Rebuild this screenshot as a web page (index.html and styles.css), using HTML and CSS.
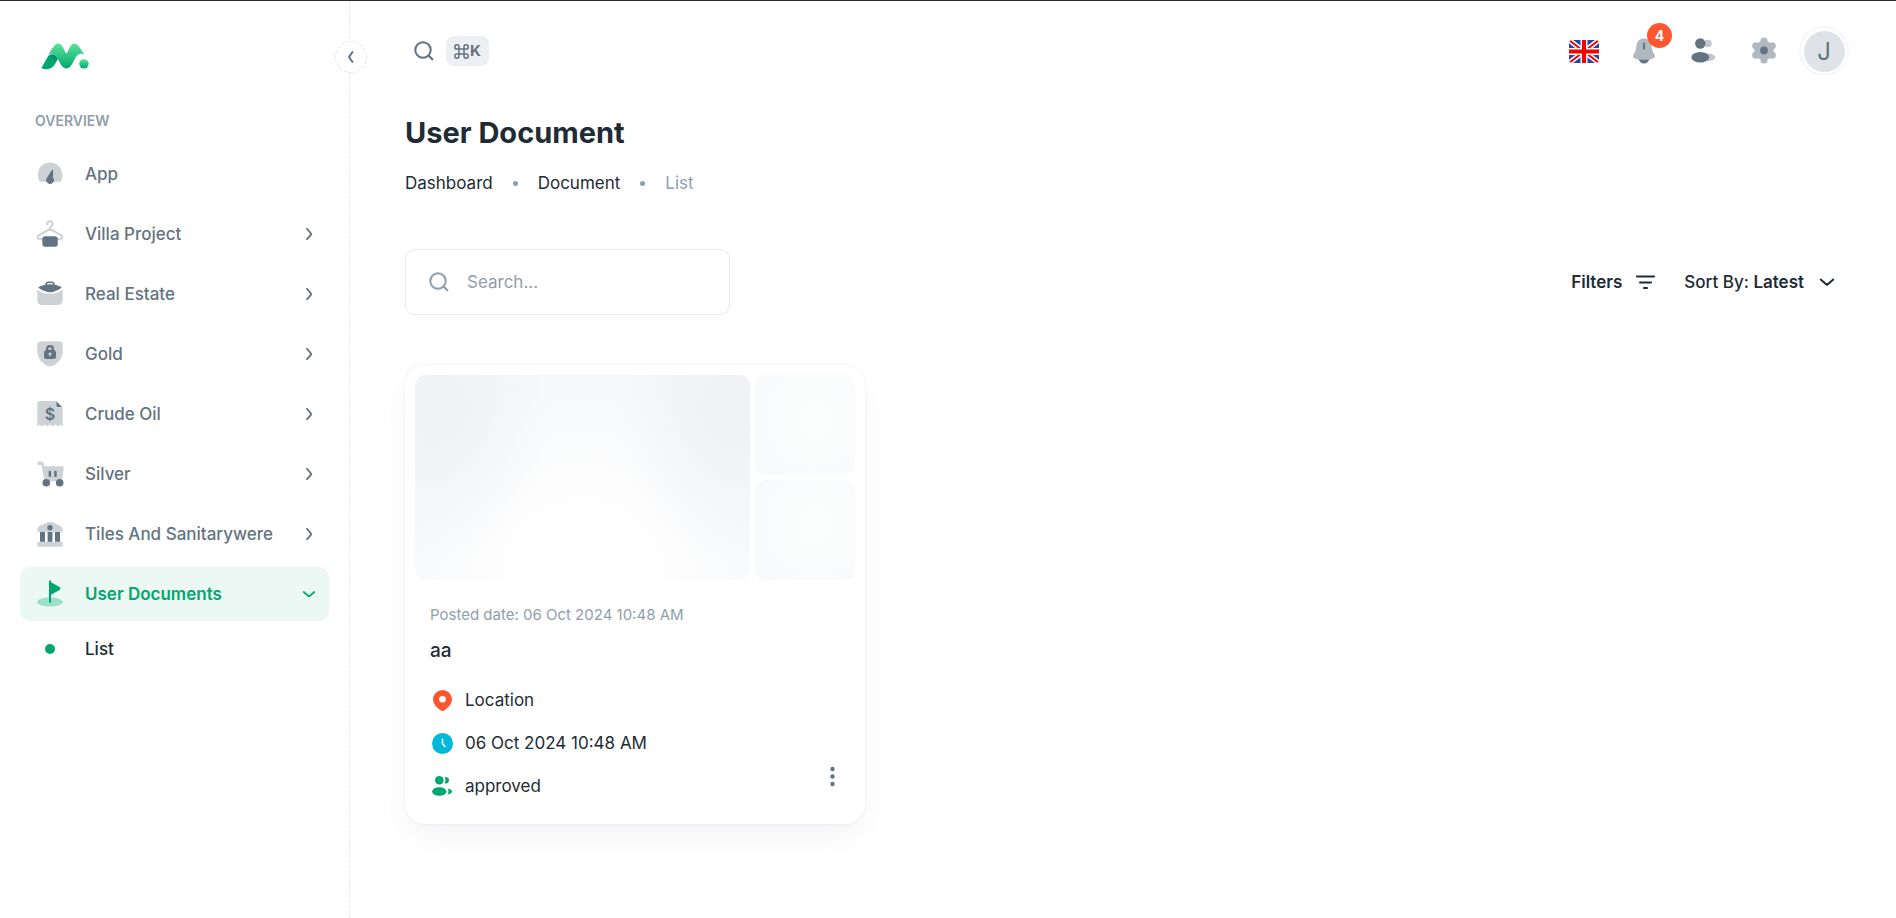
FILE: index.html
```html
<!DOCTYPE html>
<html lang="en">
<head>
<meta charset="utf-8">
<meta name="viewport" content="width=device-width, initial-scale=1">
<title>User Document</title>
<link rel="stylesheet" href="styles.css">
</head>
<body>
<svg class="defs" aria-hidden="true">
  <defs>
    <symbol id="next" viewBox="0 0 20 20"><path d="M8 4.800Q11.800 9 12.300 10Q11.800 11 8 15.200" fill="none" stroke="currentColor" stroke-width="1.800" stroke-linecap="round" stroke-linejoin="round"/></symbol>
    <symbol id="down" viewBox="0 0 20 20"><path d="M4.800 8Q9 11.800 10 12.300Q11 11.800 15.200 8" fill="none" stroke="currentColor" stroke-width="1.700" stroke-linecap="round" stroke-linejoin="round"/></symbol>
    <symbol id="search" viewBox="0 0 24 24"><circle cx="11" cy="11" r="7.700" fill="none" stroke="currentColor" stroke-width="2"/><path d="M16.500 16.500L20.300 20.300" stroke="currentColor" stroke-width="2.200" stroke-linecap="round"/></symbol>
  </defs>
</svg>
<div class="layout">
  <aside class="sidebar">
    <a class="logo" href="#" aria-label="Home">
      <svg width="50" height="50" viewBox="0 0 512 512">
        <defs>
          <linearGradient id="g1" x1="152" y1="168" x2="65" y2="345" gradientUnits="userSpaceOnUse"><stop stop-color="#007867"/><stop offset=".8" stop-color="#00a76f"/></linearGradient>
          <linearGradient id="g2" x1="0" y1="0" x2="0" y2="1"><stop stop-color="#5be49b"/><stop offset="1" stop-color="#00a76f"/></linearGradient>
        </defs>
        <path fill="url(#g2)" d="M444.310 229.726c-46.270-80.956-94.100-157.228-149.043-45.344-7.516 14.384-12.995 42.337-25.267 42.337v-.142c-12.272 0-17.750-27.953-25.265-42.337C189.790 72.356 141.960 148.628 95.690 229.584c-3.483 6.106-6.828 11.932-9.690 16.996 106.038-67.127 97.110 135.667 184 137.278V384c86.891-1.611 77.962-204.405 184-137.280-2.860-5.062-6.206-10.888-9.690-16.994"/>
        <path fill="url(#g1)" d="M183.168 285.573C170 309 154 339 145 351C134 366 122 376 108 382C78 396 44 396 14 379L86 254L89 252C138 223 162 246 183.168 285.573z"/>
        <circle cx="450" cy="336" r="48" fill="url(#g2)"/>
      </svg>
    </a>
    <h2 class="section">OVERVIEW</h2>
    <nav class="nav" aria-label="Main">
      <a class="item" href="#">
        <svg class="pic" viewBox="0 0 30 30"><path class="soft" d="M5 22.700C1 19 2 3.500 15 3.500S29 19 25.600 22.700Q15 23.500 5 22.700Z"/><path d="M16.500 11.500Q18 10 18.100 12L18 18.600A3.800 3.800 0 1 1 12.200 18.600Z"/></svg>
        <span class="label">App</span>
      </a>
      <a class="item" href="#">
        <svg class="pic" viewBox="0 0 30 30"><path class="wire" d="M12 5.300C12 1.500 17.700 1.300 17.600 5C17.500 7 15 7.300 15 9.800L3.300 16.700C2 18 2.300 20 4.500 20H25.500C27.700 20 28 18 26.700 16.700L15 9.800"/><rect x="7.300" y="17.300" width="15.500" height="10.500" rx="3"/></svg>
        <span class="label">Villa Project</span><svg class="arrow"><use href="#next"/></svg>
      </a>
      <a class="item" href="#">
        <svg class="pic" viewBox="0 0 30 30"><path class="soft" d="M2.300 10.700Q7 13.500 9.500 14.600H20.500Q23 13.500 27.700 10.700V21Q27.700 26 22.700 26H7.300Q2.300 26 2.300 21Z"/><path fill-rule="evenodd" d="M3.300 8.700Q4 7.200 10 5.800Q11 2.500 13 2.500H17Q19 2.500 20 5.800Q26 7.200 26.700 8.700Q20 13 15 13.300Q10 13 3.300 8.700ZM11.600 5.500Q15 5 18.400 5.500Q17.800 3.900 16.700 3.900H13.300Q12.200 3.900 11.600 5.500Z"/></svg>
        <span class="label">Real Estate</span><svg class="arrow"><use href="#next"/></svg>
      </a>
      <a class="item" href="#">
        <svg class="pic" viewBox="0 0 30 30"><path class="soft" d="M2.300 5Q2.500 2.700 5 2.500Q15 1.800 25 2.500Q27.500 2.700 27.700 5V12C27.500 20 22 26 15 27.700C8 26 2.500 20 2.300 12Z"/><path fill-rule="evenodd" d="M11 11V10A4 4 0 0 1 19 10V11Q21 11.500 21 13.500V17.500Q21 20 18.500 20H11.500Q9 20 9 17.500V13.500Q9 11.500 11 11ZM13.200 10.800H16.800V9.800Q16.800 8.300 15 8.300T13.200 9.800ZM15 13.500A1.300 1.300 0 0 0 14.300 16L14.500 17.500H15.500L15.700 16A1.300 1.300 0 0 0 15 13.500Z"/></svg>
        <span class="label">Gold</span><svg class="arrow"><use href="#next"/></svg>
      </a>
      <a class="item" href="#">
        <svg class="pic" viewBox="0 0 30 30"><path class="soft" d="M5 2H21V6Q21 9 24 9H27.700V27.500L25.500 25.500L23 27.500L20.500 25.500L17.700 27.500L15 25.500L12.300 27.500L9.600 25.500L7 27.500L4.500 25.500L2.300 27.500V5Q2.300 2 5 2Z"/><path d="M21.300 2.300L27.300 8.300H23Q21.300 8.300 21.300 6.600Z"/><text class="coin" x="15" y="21">$</text></svg>
        <span class="label">Crude Oil</span><svg class="arrow"><use href="#next"/></svg>
      </a>
      <a class="item" href="#">
        <svg class="pic" viewBox="0 0 30 30"><path class="soft" d="M4 2.500H6.500Q8.500 2.500 9 5L9.500 7.300H27Q29 7.300 28.700 9.500L27.300 19.500Q27 22 24.500 22.300H11.500Q9.500 22 9 20L6.500 6H4Q2.500 5.700 2.500 4.200T4 2.500Z"/><circle cx="11.300" cy="23.700" r="3.800"/><circle cx="24.700" cy="23.700" r="3.800"/><rect x="13.600" y="11.700" width="2.500" height="6.200" rx="1.200"/><rect x="19.200" y="11.700" width="2.500" height="6.200" rx="1.200"/></svg>
        <span class="label">Silver</span><svg class="arrow"><use href="#next"/></svg>
      </a>
      <a class="item" href="#">
        <svg class="pic" viewBox="0 0 30 30"><path class="soft" d="M4.500 7L12.500 3.200Q15 2.200 17.500 3.200L25.500 7Q27.700 8.500 27.700 10.500V11.500Q27.700 13 26 13H4Q2.300 13 2.300 11.500V10.500Q2.300 8.500 4.500 7Z"/><path d="M5 13H10V22.700H5ZM12.600 13H17.400V22.700H12.600ZM20 13H25V22.700H20Z"/><circle cx="15" cy="8.700" r="2.700"/><rect class="soft" x="2.300" y="22.700" width="25.400" height="5" rx="1.500"/></svg>
        <span class="label">Tiles And Sanitarywere</span><svg class="arrow"><use href="#next"/></svg>
      </a>
      <a class="item active" href="#" aria-expanded="true">
        <svg class="pic" viewBox="0 0 30 30"><ellipse class="soft" cx="15" cy="23" rx="12.700" ry="4.500"/><path d="M14 2Q14 1.200 15 1.200T16 2.200V3.200L24.500 8Q26.500 9.500 24.500 11L16 15.700V23.500H14Z"/></svg>
        <span class="label">User Documents</span><svg class="arrow"><use href="#down"/></svg>
      </a>
      <a class="item sub" href="#" aria-current="page">
        <span class="bullet"><span class="dot"></span></span>
        <span class="label">List</span>
      </a>
    </nav>
    <button class="collapse" type="button" aria-label="Collapse menu"><svg width="20" height="20" viewBox="0 0 20 20"><path d="M11.500 5L8 10L11.500 15" fill="none" stroke="currentColor" stroke-width="2" stroke-linecap="round" stroke-linejoin="round"/></svg></button>
  </aside>

  <div class="page">
    <header class="topbar">
      <button class="quick" type="button" aria-label="Search">
        <svg width="24" height="24"><use href="#search"/></svg>
        <kbd class="key"><svg width="15" height="15" viewBox="0 0 15 15"><path d="M5 5V2.900A2.100 2.100 0 1 0 2.900 5H12.100A2.100 2.100 0 1 0 10 2.900V12.100A2.100 2.100 0 1 0 12.100 10H2.900A2.100 2.100 0 1 0 5 12.100Z" fill="none" stroke="currentColor" stroke-width="1.500"/></svg>K</kbd>
      </button>
      <div class="tools">
        <button class="tool" type="button" aria-label="Language">
          <svg width="30" height="23" viewBox="0 0 30 23"><clipPath id="fc"><rect width="30" height="23" rx="4"/></clipPath><g clip-path="url(#fc)"><path fill="#2e42a5" d="M0 0H30V23H0Z"/><path d="M0 0L30 23M30 0L0 23" stroke="#fff" stroke-width="5"/><path d="M0 0L30 23M30 0L0 23" stroke="#f50100" stroke-width="1.900"/><path d="M15 0V23M0 11.500H30" stroke="#fff" stroke-width="7"/><path d="M15 0V23M0 11.500H30" stroke="#f50100" stroke-width="4"/></g></svg>
        </button>
        <button class="tool" type="button" aria-label="Notifications">
          <svg width="30" height="30" viewBox="0 0 30 30"><path fill="#637381" d="M9 22H21Q19 27.500 15 27.500T9 22Z"/><path fill="#b1b9c0" d="M7.500 9.500C8 5 11 2.500 15 2.500S22 5 22.500 9.500C22.700 14 24 16 25.500 18.500C27 22 24 23 21 23.300Q15 24.300 9 23.300C6 23 3 22 4.500 18.500C6 16 7.300 14 7.500 9.500Z"/><rect x="14.100" y="6.600" width="1.900" height="7" rx=".9" fill="#637381"/></svg>
          <span class="badge">4</span>
        </button>
        <button class="tool" type="button" aria-label="Contacts">
          <svg width="30" height="30" viewBox="0 0 30 30"><circle cx="19" cy="7.500" r="3.800" fill="#c1c7cd"/><ellipse cx="19" cy="21.300" rx="7.300" ry="3.700" fill="#c1c7cd"/><circle cx="11.300" cy="7.500" r="5.200" fill="#637381"/><ellipse cx="11.300" cy="21.300" rx="8.900" ry="5.200" fill="#637381"/></svg>
        </button>
        <button class="tool" type="button" aria-label="Settings">
          <svg width="30" height="30" viewBox="0 0 30 30"><g fill="#b1b9c0"><circle cx="15" cy="14.500" r="9.700"/><circle cx="15" cy="5" r="3.600"/><circle cx="15" cy="24" r="3.600"/><circle cx="23.200" cy="9.800" r="3.600"/><circle cx="23.200" cy="19.200" r="3.600"/><circle cx="6.800" cy="9.800" r="3.600"/><circle cx="6.800" cy="19.200" r="3.600"/></g><circle cx="15" cy="14.500" r="3.900" fill="#637381"/></svg>
        </button>
        <button class="avatar" type="button" aria-label="Account"><span class="face">J</span></button>
      </div>
    </header>

    <main class="main">
      <h1 class="title">User Document</h1>
      <nav class="crumbs" aria-label="Breadcrumb">
        <a href="#">Dashboard</a><span class="sep"></span><a href="#">Document</a><span class="sep"></span><span class="here">List</span>
      </nav>

      <div class="controls">
        <label class="search">
          <svg width="24" height="24"><use href="#search"/></svg>
          <input type="text" placeholder="Search..." aria-label="Search documents">
        </label>
        <div class="sorting">
          <button class="plain" type="button">Filters
            <svg width="25" height="25" viewBox="0 0 25 25"><path d="M4 6.500H21M7 12.500H18M11 18H14" stroke="currentColor" stroke-width="2.100" stroke-linecap="round"/></svg>
          </button>
          <button class="plain sort" type="button"><span>Sort By: <b>Latest</b></span>
            <svg width="24" height="24"><use href="#down"/></svg>
          </button>
        </div>
      </div>

      <div class="grid">
        <article class="card">
          <div class="gallery">
            <div class="photo large"></div>
            <div class="photo"></div>
            <div class="photo"></div>
          </div>
          <div class="info">
            <p class="posted">Posted date: 06 Oct 2024 10:48 AM</p>
            <h3 class="name"><a href="#">aa</a></h3>
            <div class="foot">
              <ul class="facts">
                <li><svg width="25" height="25" viewBox="0 0 25 25"><path fill="#ff5630" fill-rule="evenodd" d="M12.500 2A9.500 9.500 0 0 1 22 11.300C22 16.500 18 19.500 14.500 22.300Q12.500 23.800 10.500 22.300C7 19.500 3 16.500 3 11.300A9.500 9.500 0 0 1 12.500 2ZM12.500 8A3.300 3.300 0 1 0 12.500 14.600A3.300 3.300 0 1 0 12.500 8Z"/></svg>Location</li>
                <li><svg width="25" height="25" viewBox="0 0 25 25"><circle cx="12.500" cy="12.500" r="10.500" fill="#00b8d9"/><path d="M12.500 8.300V12.700L15 15.500" fill="none" stroke="#fff" stroke-width="1.600" stroke-linecap="round" stroke-linejoin="round"/></svg>06 Oct 2024 10:48 AM</li>
                <li><svg width="25" height="25" viewBox="0 0 25 25" fill="#00a76f"><circle cx="9.300" cy="6.300" r="4.300"/><ellipse cx="9.300" cy="17.500" rx="7.200" ry="4.300"/><path d="M14.700 3Q19 3 19 6.300T14.700 9.500Q16.500 6.300 14.700 3ZM17.500 14.800Q22 15.200 22 17.500T17.500 20.400Q19.500 17.500 17.500 14.800Z"/></svg>approved</li>
              </ul>
              <button class="more" type="button" aria-label="More actions"><svg width="25" height="25" viewBox="0 0 25 25" fill="currentColor"><circle cx="12.500" cy="5" r="2.200"/><circle cx="12.500" cy="12.500" r="2.200"/><circle cx="12.500" cy="20" r="2.200"/></svg></button>
            </div>
          </div>
        </article>
      </div>
    </main>
  </div>
</div>
</body>
</html>
```
FILE: styles.css
```css
* { box-sizing: border-box; }
body {
  margin: 0;
  border-top: 1px solid #2d2a33;
  background: #fff;
  color: #212b36;
  font-family: Inter, "Liberation Sans", sans-serif;
  font-size: 17px;
  line-height: 26px;
}
a { color: inherit; text-decoration: none; }
button {
  padding: 0;
  border: 0;
  background: none;
  color: inherit;
  font: inherit;
  cursor: pointer;
}
h1, h2, h3, p, ul { margin: 0; padding: 0; }
.defs { position: absolute; width: 0; height: 0; }

.layout { display: flex; min-height: calc(100vh - 1px); }

.sidebar {
  position: relative;
  flex: none;
  width: 350px;
  padding: 30px 20px;
  border-right: 1px dashed #e6e9ec;
}
.logo { display: block; width: 50px; height: 50px; margin-left: 20px; }
.section {
  margin: 30px 15px 16px;
  color: #919eab;
  font-size: 14px;
  line-height: 20px;
  font-weight: 600;
}
.nav { display: flex; flex-direction: column; gap: 6px; }
.item {
  display: flex;
  align-items: center;
  gap: 20px;
  height: 54px;
  padding: 0 10px 0 15px;
  border-radius: 10px;
  color: #637381;
  font-weight: 500;
}
.pic { flex: none; width: 30px; height: 30px; fill: currentColor; }
.soft { fill-opacity: .32; }
.wire { fill: none; stroke: currentColor; stroke-opacity: .32; stroke-width: 2; stroke-linejoin: round; stroke-linecap: round; }
.coin { font-size: 16px; font-weight: 600; text-anchor: middle; }
.label { flex: 1; white-space: nowrap; }
.arrow { width: 20px; height: 20px; }
.active { background: #ebf8f3; color: #00a76f; font-weight: 600; }
.sub { height: 44px; color: #212b36; }
.bullet { display: flex; justify-content: center; width: 30px; }
.dot { width: 10px; height: 10px; border-radius: 50%; background: #00a76f; }
.collapse {
  position: absolute;
  top: 40px;
  right: -18px;
  display: grid;
  place-items: center;
  width: 32px;
  height: 32px;
  border: 1px dashed #e1e5e8;
  border-radius: 50%;
  background: #fff;
  color: #637381;
}

.page { flex: 1; min-width: 0; }
.topbar {
  display: flex;
  align-items: center;
  justify-content: space-between;
  padding: 25px 47px 0 62px;
}
.quick { display: flex; align-items: center; gap: 10px; color: #637381; }
.key {
  display: flex;
  align-items: center;
  gap: 1px;
  height: 30px;
  padding: 0 8px;
  border-radius: 8px;
  background: #edeff2;
  font-family: inherit;
  font-size: 15px;
  font-weight: 700;
}
.tools { display: flex; gap: 10px; }
.tool {
  position: relative;
  display: grid;
  place-items: center;
  width: 50px;
  height: 50px;
}
.badge {
  position: absolute;
  top: -3px;
  right: -3px;
  width: 25px;
  height: 25px;
  border-radius: 50%;
  background: #ff5630;
  color: #fff;
  font-size: 14px;
  line-height: 25px;
  font-weight: 700;
}
.avatar {
  display: grid;
  place-items: center;
  width: 50px;
  height: 50px;
  border: 2px solid #f6f7f8;
  border-radius: 50%;
}
.face {
  width: 41px;
  height: 41px;
  border-radius: 50%;
  background: #dfe3e8;
  color: #637381;
  font-size: 24px;
  line-height: 41px;
}

.main { padding: 34px 51px 60px 55px; }
.title { font-size: 29px; line-height: 46px; font-weight: 700; }
.crumbs {
  display: flex;
  align-items: center;
  gap: 20px;
  margin-top: 14px;
}
.sep { width: 5px; height: 5px; border-radius: 50%; background: #919eab; }
.here { color: #919eab; }

.controls {
  display: flex;
  align-items: center;
  justify-content: space-between;
  margin: 53px 0 50px;
}
.search {
  display: flex;
  align-items: center;
  gap: 16px;
  width: 325px;
  height: 66px;
  padding: 0 21px;
  border: 1px solid #e6eaed;
  border-radius: 10px;
  color: #919eab;
}
.search input {
  flex: 1;
  min-width: 0;
  padding: 0;
  border: 0;
  outline: 0;
  background: none;
  color: #212b36;
  font: inherit;
}
.search input::placeholder { color: #919eab; opacity: 1; }
.sorting { display: flex; gap: 26px; padding-right: 6px; }
.plain { display: flex; align-items: center; gap: 11px; font-weight: 600; }
.sort { font-weight: 500; }
.sort b { font-weight: 600; }

.grid { display: grid; grid-template-columns: repeat(3, 1fr); gap: 30px; }
.card {
  border-radius: 20px;
  background: #fff;
  box-shadow: 0 0 3px rgba(145, 158, 171, .2), 0 15px 30px -5px rgba(145, 158, 171, .12);
}
.gallery {
  display: grid;
  grid-template-columns: 1fr 100px;
  grid-template-rows: 100px 100px;
  gap: 5px;
  padding: 10px;
}
.photo { border-radius: 10px; background: radial-gradient(circle at 60% 45%, #fcfdfd, #f8f9fa); }
.large {
  grid-row: span 2;
  background:
    radial-gradient(ellipse 32% 75% at 8% 17%, rgba(228, 231, 235, .45), transparent),
    radial-gradient(ellipse 32% 75% at 93% 17%, rgba(228, 231, 235, .45), transparent),
    radial-gradient(ellipse 60% 100% at 50% 100%, #fff 25%, #f7f8fa);
}
.info { padding: 12px 20px 25px 25px; }
.posted { color: #919eab; font-size: 15px; }
.name { margin-top: 10px; font-size: 19px; line-height: 26px; font-weight: 500; }
.foot { display: flex; align-items: center; justify-content: space-between; margin-top: 23px; }
.facts { display: grid; gap: 17px; list-style: none; }
.facts li { display: flex; align-items: center; gap: 10px; }
.more { align-self: flex-end; width: 25px; height: 25px; margin-bottom: 10px; color: #637381; }
.more svg, .tool svg, .quick svg { display: block; }
```
